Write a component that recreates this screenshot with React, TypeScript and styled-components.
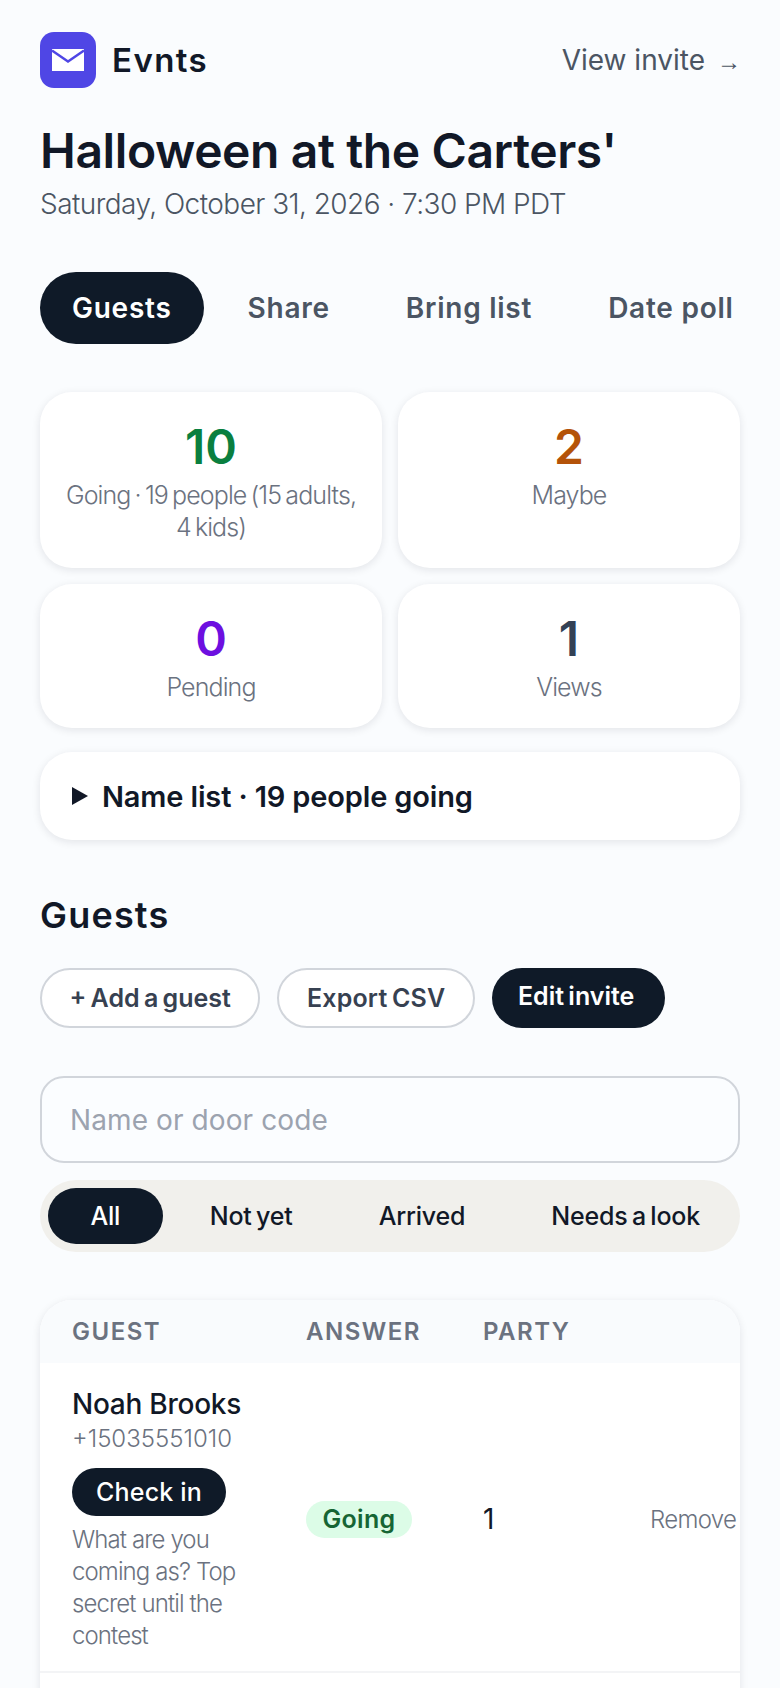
import React from "react";
import styled, { createGlobalStyle } from "styled-components";

const Global = createGlobalStyle`
  html, body { margin: 0; padding: 0; height: 1688px; overflow: hidden; background: #fafcfe; }
  * { box-sizing: border-box; }
  body { font-family: Inter, "Liberation Sans", sans-serif; color: #111827; }
`;

const Page = styled.div`
  height: 1688px;
  overflow: hidden;
  padding: 32px 40px 0;
`;

const TopBar = styled.header`
  display: flex;
  align-items: center;
  justify-content: space-between;
  height: 56px;
`;

const Brand = styled.div`
  display: flex;
  align-items: center;
  gap: 16px;
  font-size: 33px;
  font-weight: 600;
  letter-spacing: 1.4px;
`;

const LogoTile = styled.div`
  width: 56px;
  height: 56px;
  border-radius: 14px;
  background: #4f46e5;
  display: flex;
  align-items: center;
  justify-content: center;
`;

const InviteLink = styled.a`
  display: flex;
  align-items: baseline;
  gap: 12px;
  font-size: 28px;
  color: #4b5563;
  letter-spacing: 0;
  margin-right: -1px;
`;

const Arrow = styled.span`
  font-family: "Liberation Sans", sans-serif;
  font-size: 24px;
`;

const Title = styled.h1`
  margin: 33px 0 0;
  font-size: 48px;
  line-height: 60px;
  font-weight: 600;
  letter-spacing: -0.4px;
  color: #111827;
`;

const Subtitle = styled.p`
  margin: 3px 0 0;
  font-size: 28px;
  line-height: 40px;
  font-weight: 300;
  color: #4b5563;
  letter-spacing: -0.55px;
`;

const Tabs = styled.nav`
  display: flex;
  gap: 12px;
  margin-top: 48px;
  white-space: nowrap;
`;

const Tab = styled.button<{ $active?: boolean }>`
  height: 72px;
  padding: 0 32px;
  border: 0;
  border-radius: 36px;
  font: 600 28px Inter, sans-serif;
  letter-spacing: 0.75px;
  background: ${(p) => (p.$active ? "#0f1a28" : "transparent")};
  color: ${(p) => (p.$active ? "#ffffff" : "#4b5563")};
`;

const StatGrid = styled.section`
  display: grid;
  grid-template-columns: 342px 342px;
  gap: 16px;
  margin-top: 48px;
`;

const Card = styled.div`
  background: #ffffff;
  border-radius: 32px;
  box-shadow: 0 2px 8px rgba(17, 24, 39, 0.1);
`;

const StatCard = styled(Card)`
  padding: 27px 24px 25px;
  text-align: center;
`;

const StatValue = styled.div<{ $color: string }>`
  font-size: 48px;
  line-height: 56px;
  font-weight: 600;
  letter-spacing: 0;
  margin-bottom: 4px;
  color: ${(p) => p.$color};
`;

const StatLabel = styled.div`
  font-size: 25px;
  line-height: 32px;
  font-weight: 300;
  color: #6b7280;
  letter-spacing: -0.9px;
  word-spacing: -2px;
`;

const NameList = styled(Card)`
  margin-top: 24px;
  height: 88px;
  padding: 0 32px;
  display: flex;
  align-items: center;
  gap: 14px;
  font-size: 29px;
  font-weight: 600;
  letter-spacing: -0.15px;
`;

const SectionTitle = styled.h2`
  margin: 51px 0 0;
  font-size: 36px;
  line-height: 48px;
  font-weight: 600;
  letter-spacing: 1.2px;
  color: #111827;
`;

const Actions = styled.div`
  display: flex;
  gap: 17px;
  margin-top: 29px;
`;

const ActionButton = styled.button<{ $dark?: boolean; $track?: string }>`
  height: 60px;
  padding: ${(p) => (p.$dark ? "0 31px 4px 26px" : "0 27.5px")};
  border-radius: 30px;
  border: ${(p) => (p.$dark ? "0" : "2px solid #d1d5db")};
  background: ${(p) => (p.$dark ? "#0f1a28" : "#ffffff")};
  color: ${(p) => (p.$dark ? "#ffffff" : "#374151")};
  font: 600 25px Inter, sans-serif;
  letter-spacing: ${(p) => p.$track ?? "0"};
  word-spacing: -2px;
  white-space: nowrap;
`;

const SearchInput = styled.input`
  display: block;
  width: 700px;
  height: 87px;
  margin-top: 48px;
  padding: 0 28px;
  border: 2px solid #d1d5db;
  border-radius: 24px;
  background: #fbfdff;
  font: 400 28px Inter, sans-serif;
  letter-spacing: 0.1px;
  &::placeholder { color: #9ca3af; opacity: 1; }
`;

const Segments = styled.div`
  display: flex;
  align-items: center;
  gap: 8px;
  height: 72px;
  margin-top: 17px;
  padding: 0 8px;
  border-radius: 36px;
  background: #f1f0ec;
`;

const Segment = styled.button<{ $active?: boolean }>`
  height: 56px;
  padding: 0 ${(p) => (p.$active ? "42.5px" : "39px")};
  border: 0;
  border-radius: 28px;
  background: ${(p) => (p.$active ? "#0f1a28" : "transparent")};
  color: ${(p) => (p.$active ? "#ffffff" : "#111827")};
  font: 500 25px Inter, sans-serif;
  letter-spacing: -0.2px;
  word-spacing: -2px;
  white-space: nowrap;
`;

const TableCard = styled(Card)`
  margin-top: 48px;
  overflow: hidden;
`;

const HeaderRow = styled.div`
  display: grid;
  grid-template-columns: 234px 177px 167px 1fr;
  align-items: center;
  height: 63px;
  padding-left: 32px;
  background: #f9fbfd;
  font-size: 24px;
  font-weight: 600;
  color: #6b7280;
  letter-spacing: 1.5px;
`;

const GuestRow = styled.div`
  display: grid;
  grid-template-columns: 234px 177px 167px 1fr;
  align-items: center;
  padding: 23px 0 19px 32px;
  border-bottom: 2px solid #f3f4f6;
`;

const EmptyRow = styled.div`
  height: 80px;
`;

const GuestCell = styled.div`
  width: 178px;
`;

const GuestName = styled.div`
  font-size: 28px;
  line-height: 36px;
  font-weight: 500;
  letter-spacing: -0.25px;
`;

const GuestPhone = styled.div`
  margin-top: 1px;
  font-size: 24px;
  line-height: 32px;
  font-weight: 300;
  color: #6b7280;
  letter-spacing: 0;
`;

const CheckIn = styled.button`
  display: block;
  height: 48px;
  margin-top: 13px;
  padding: 0 24px;
  border: 0;
  border-radius: 24px;
  background: #0f1a28;
  color: #ffffff;
  font: 500 25px Inter, sans-serif;
  letter-spacing: 0.2px;
  white-space: nowrap;
`;

const Note = styled.div`
  margin-top: 8px;
  font-size: 24px;
  line-height: 32px;
  font-weight: 300;
  color: #6b7280;
  letter-spacing: -0.9px;
`;

const Badge = styled.span`
  justify-self: start;
  display: inline-flex;
  align-items: center;
  height: 37px;
  padding: 0 16.5px;
  border-radius: 19px;
  background: #dcfce7;
  color: #166534;
  font-size: 25px;
  font-weight: 600;
  letter-spacing: 0.3px;
`;

const Party = styled.div`
  font-size: 28px;
  color: #111827;
`;

const RemoveLink = styled.a`
  font-size: 24px;
  font-weight: 300;
  color: #6b7280;
  letter-spacing: -0.7px;
  white-space: nowrap;
`;

const MailIcon = () => (
  <svg width="32" height="22" viewBox="0 0 32 22" aria-hidden="true">
    <rect width="32" height="22" fill="#fff" />
    <path d="M0 1.5L16 12.5 32 1.5" fill="none" stroke="#4f46e5" strokeWidth="2.4" />
  </svg>
);

const Caret = () => (
  <svg width="16" height="18" viewBox="0 0 16 18" aria-hidden="true">
    <path d="M0 0l16 9L0 18z" fill="#111827" />
  </svg>
);

export default function App() {
  return (
    <Page>
      <Global />
      <TopBar>
        <Brand>
          <LogoTile>
            <MailIcon />
          </LogoTile>
          Evnts
        </Brand>
        <InviteLink>
          View invite <Arrow>→</Arrow>
        </InviteLink>
      </TopBar>
      <Title>Halloween at the Carters'</Title>
      <Subtitle>Saturday, October 31, 2026 · 7:30 PM PDT</Subtitle>
      <Tabs>
        <Tab $active>Guests</Tab>
        <Tab>Share</Tab>
        <Tab>Bring list</Tab>
        <Tab>Date poll</Tab>
      </Tabs>
      <StatGrid>
        <StatCard>
          <StatValue $color="#0a7f3f">10</StatValue>
          <StatLabel>Going · 19 people (15 adults, 4 kids)</StatLabel>
        </StatCard>
        <StatCard>
          <StatValue $color="#b45309">2</StatValue>
          <StatLabel>Maybe</StatLabel>
        </StatCard>
        <StatCard>
          <StatValue $color="#6d0fe0">0</StatValue>
          <StatLabel>Pending</StatLabel>
        </StatCard>
        <StatCard>
          <StatValue $color="#334155">1</StatValue>
          <StatLabel>Views</StatLabel>
        </StatCard>
      </StatGrid>
      <NameList>
        <Caret />
        Name list · 19 people going
      </NameList>
      <SectionTitle>Guests</SectionTitle>
      <Actions>
        <ActionButton>+ Add a guest</ActionButton>
        <ActionButton $track="0.2px">Export CSV</ActionButton>
        <ActionButton $dark>Edit invite</ActionButton>
      </Actions>
      <SearchInput placeholder="Name or door code" />
      <Segments>
        <Segment $active>All</Segment>
        <Segment>Not yet</Segment>
        <Segment>Arrived</Segment>
        <Segment>Needs a look</Segment>
      </Segments>
      <TableCard>
        <HeaderRow>
          <div>GUEST</div>
          <div>ANSWER</div>
          <div>PARTY</div>
          <div />
        </HeaderRow>
        <GuestRow>
          <GuestCell>
            <GuestName>Noah Brooks</GuestName>
            <GuestPhone>+15035551010</GuestPhone>
            <CheckIn>Check in</CheckIn>
            <Note>What are you coming as? Top secret until the contest</Note>
          </GuestCell>
          <Badge>Going</Badge>
          <Party>1</Party>
          <RemoveLink>Remove</RemoveLink>
        </GuestRow>
        <EmptyRow />
      </TableCard>
    </Page>
  );
}
